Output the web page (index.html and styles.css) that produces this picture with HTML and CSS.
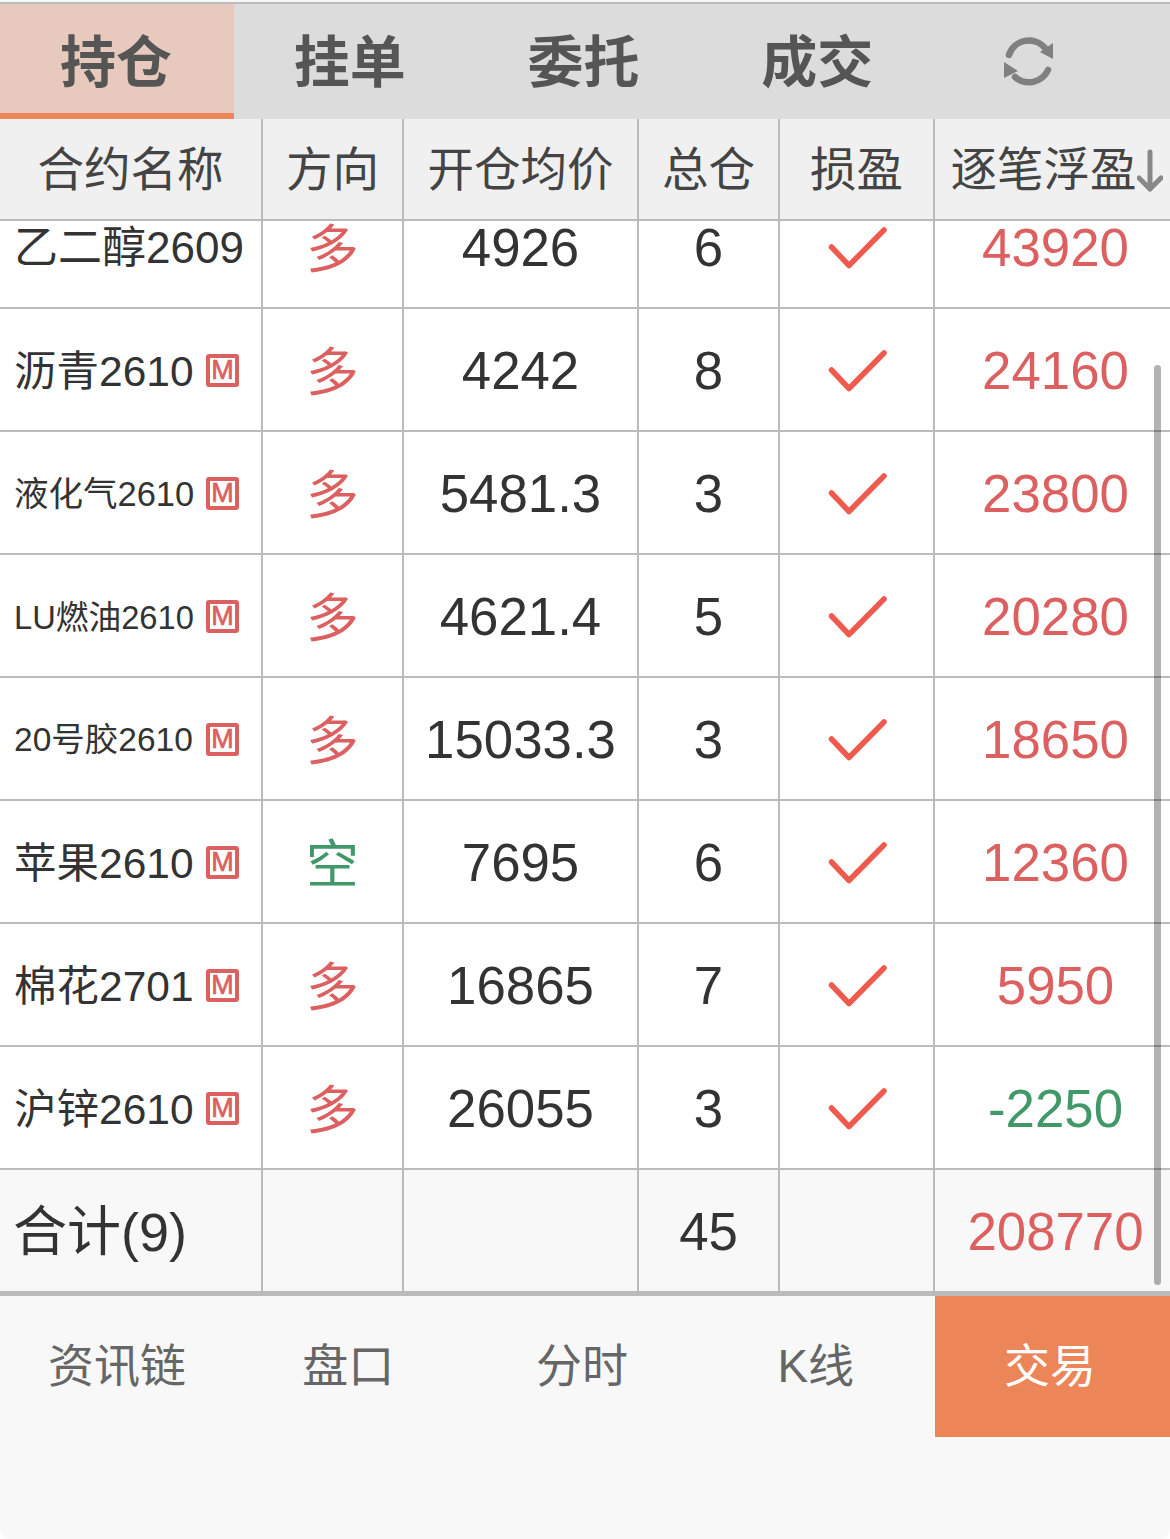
FILE: index.html
```html
<!DOCTYPE html>
<html lang="zh-CN">
<head>
    <meta charset="UTF-8">
    <meta name="viewport" content="width=device-width, initial-scale=1.0">
    <title>持仓</title>
    <link rel="stylesheet" href="styles.css">
</head>
<body>
    <div class="screen">
        <div class="tabs">
            <div class="tab active">持仓</div>
            <div class="tab">挂单</div>
            <div class="tab">委托</div>
            <div class="tab">成交</div>
            <div class="tab refresh-tab">
                <svg class="refresh-icon" viewBox="0 0 52 52" width="52" height="52">
                    <path d="M6 20 A21 21 0 0 1 42 13" class="refresh-arc"/>
                    <path d="M50 8 V24 L37 17 Z" class="refresh-head"/>
                    <path d="M45 35 A21 21 0 0 1 12 42" class="refresh-arc"/>
                    <path d="M1 27 V43 L15 36 Z" class="refresh-head"/>
                </svg>
            </div>
        </div>

        <div class="row head-row">
            <div class="cell">合约名称</div>
            <div class="cell">方向</div>
            <div class="cell">开仓均价</div>
            <div class="cell">总仓</div>
            <div class="cell">损盈</div>
            <div class="cell sort-cell">逐笔浮盈<svg class="sort-arrow" viewBox="0 0 26 46" width="26" height="46"><path d="M13 5 V42 M2 31 L13 42 L24 31"/></svg></div>
        </div>

        <div class="list">
            <div class="list-inner">
                <div class="row pos-row">
                    <div class="cell name size-l">乙二醇2609</div>
                    <div class="cell dir up">多</div>
                    <div class="cell">4926</div>
                    <div class="cell">6</div>
                    <div class="cell"><svg class="check" viewBox="0 0 60 44" width="60" height="44"><path d="M4.5 22 L22 40.5 L57 5"/></svg></div>
                    <div class="cell up">43920</div>
                </div>
                <div class="row pos-row">
                    <div class="cell name size-m">沥青2610<span class="badge">M</span></div>
                    <div class="cell dir up">多</div>
                    <div class="cell">4242</div>
                    <div class="cell">8</div>
                    <div class="cell"><svg class="check" viewBox="0 0 60 44" width="60" height="44"><path d="M4.5 22 L22 40.5 L57 5"/></svg></div>
                    <div class="cell up">24160</div>
                </div>
                <div class="row pos-row">
                    <div class="cell name size-s">液化气2610<span class="badge">M</span></div>
                    <div class="cell dir up">多</div>
                    <div class="cell">5481.3</div>
                    <div class="cell">3</div>
                    <div class="cell"><svg class="check" viewBox="0 0 60 44" width="60" height="44"><path d="M4.5 22 L22 40.5 L57 5"/></svg></div>
                    <div class="cell up">23800</div>
                </div>
                <div class="row pos-row">
                    <div class="cell name size-xs">LU燃油2610<span class="badge">M</span></div>
                    <div class="cell dir up">多</div>
                    <div class="cell">4621.4</div>
                    <div class="cell">5</div>
                    <div class="cell"><svg class="check" viewBox="0 0 60 44" width="60" height="44"><path d="M4.5 22 L22 40.5 L57 5"/></svg></div>
                    <div class="cell up">20280</div>
                </div>
                <div class="row pos-row">
                    <div class="cell name size-t">20号胶2610<span class="badge">M</span></div>
                    <div class="cell dir up">多</div>
                    <div class="cell">15033.3</div>
                    <div class="cell">3</div>
                    <div class="cell"><svg class="check" viewBox="0 0 60 44" width="60" height="44"><path d="M4.5 22 L22 40.5 L57 5"/></svg></div>
                    <div class="cell up">18650</div>
                </div>
                <div class="row pos-row">
                    <div class="cell name size-m">苹果2610<span class="badge">M</span></div>
                    <div class="cell dir down">空</div>
                    <div class="cell">7695</div>
                    <div class="cell">6</div>
                    <div class="cell"><svg class="check" viewBox="0 0 60 44" width="60" height="44"><path d="M4.5 22 L22 40.5 L57 5"/></svg></div>
                    <div class="cell up">12360</div>
                </div>
                <div class="row pos-row">
                    <div class="cell name size-m">棉花2701<span class="badge">M</span></div>
                    <div class="cell dir up">多</div>
                    <div class="cell">16865</div>
                    <div class="cell">7</div>
                    <div class="cell"><svg class="check" viewBox="0 0 60 44" width="60" height="44"><path d="M4.5 22 L22 40.5 L57 5"/></svg></div>
                    <div class="cell up">5950</div>
                </div>
                <div class="row pos-row">
                    <div class="cell name size-m">沪锌2610<span class="badge">M</span></div>
                    <div class="cell dir up">多</div>
                    <div class="cell">26055</div>
                    <div class="cell">3</div>
                    <div class="cell"><svg class="check" viewBox="0 0 60 44" width="60" height="44"><path d="M4.5 22 L22 40.5 L57 5"/></svg></div>
                    <div class="cell down">-2250</div>
                </div>
                <div class="row total-row">
                    <div class="cell name size-total">合计(9)</div>
                    <div class="cell"></div>
                    <div class="cell"></div>
                    <div class="cell">45</div>
                    <div class="cell"></div>
                    <div class="cell up">208770</div>
                </div>
            </div>
            <div class="scrollbar"></div>
        </div>

        <div class="bottom-nav">
            <div class="nav-item">资讯链</div>
            <div class="nav-item">盘口</div>
            <div class="nav-item">分时</div>
            <div class="nav-item">K线</div>
            <div class="nav-item trade">交易</div>
        </div>
    </div>
</body>
</html>
```

FILE: styles.css
```css
body {
    margin: 0;
    background: #fff;
    font-family: "Liberation Sans", "Noto Sans CJK SC", sans-serif;
    color: #333;
    overflow: hidden;
}

.screen {
    height: 1539px;
    padding-top: 2px;
    box-sizing: border-box;
    background: #f8f8f8;
    border-radius: 0 0 10px 10px;
    overflow: hidden;
}

.tabs {
    display: grid;
    grid-template-columns: repeat(4, 233.8px) 1fr;
    height: 115px;
    border-top: 2px solid #bbb;
    background: #dcdcdc;
}

.tab {
    display: flex;
    align-items: center;
    justify-content: center;
    padding: 2px 2px 0 0;
    font-size: 56px;
    line-height: 1.2;
    font-weight: bold;
    color: #555;
}

.tab.active {
    background: #e8c9bd;
    border-bottom: 6px solid #ec8558;
    padding-top: 8px;
}

.refresh-tab {
    padding: 0 48px 2px 0;
}

.refresh-arc {
    fill: none;
    stroke: #808080;
    stroke-width: 6.5;
    stroke-linecap: round;
}

.refresh-head {
    fill: #808080;
}

.row {
    display: grid;
    grid-template-columns: 263px 141px 235px 141px 155px 1fr;
}

.cell {
    display: flex;
    align-items: center;
    justify-content: center;
    padding-top: 2px;
    border-right: 2px solid #bbb;
    white-space: nowrap;
    font-size: 52.8px;
    line-height: 1.2;
}

.cell:last-child {
    border-right: none;
    padding-left: 6px;
}

.head-row {
    height: 102px;
    background: #f0f0f0;
    border-bottom: 2px solid #bbb;
    box-sizing: border-box;
}

.head-row .cell {
    font-size: 46.5px;
    color: #444;
    padding-top: 4px;
}

.head-row .sort-cell {
    padding-left: 8px;
}

.sort-arrow {
    margin-top: -2px;
}

.sort-arrow path {
    fill: none;
    stroke: #888;
    stroke-width: 5;
    stroke-linecap: round;
    stroke-linejoin: round;
}

.list {
    position: relative;
    height: 1070px;
    overflow: hidden;
}

/* first row is scrolled up a bit */
.list-inner {
    margin-top: -35px;
}

.pos-row {
    height: 123px;
    box-sizing: border-box;
    background: #fff;
    border-bottom: 2px solid #bbb;
}

.total-row {
    height: 121px;
    background: #f8f8f8;
}

.name {
    justify-content: space-between;
    padding: 4px 22px 0 14px;
}

.dir {
    padding-top: 6px;
}

.size-l { font-size: 44px; }
.size-m { font-size: 42.5px; }
.size-s { font-size: 34.5px; }
.size-t { font-size: 33.5px; }
.size-xs { font-size: 32.7px; }

.size-total {
    font-size: 54px;
    padding-left: 13px;
}

.up { color: #dc6060; }
.down { color: #419868; }

.badge {
    display: flex;
    align-items: center;
    justify-content: center;
    width: 33px;
    height: 33px;
    margin-top: -2px;
    box-sizing: border-box;
    border: 4px solid #dc6060;
    border-radius: 3px;
    font-size: 27px;
    color: #dc6060;
    -webkit-text-stroke: 0.7px #dc6060;
}

.check {
    margin-top: -2px;
}

.check path {
    fill: none;
    stroke: #ee5a4e;
    stroke-width: 5.5;
    stroke-linecap: round;
    stroke-linejoin: round;
}

.scrollbar {
    position: absolute;
    right: 9px;
    top: 144px;
    width: 7px;
    height: 920px;
    border-radius: 4px;
    background: rgba(0, 0, 0, 0.3);
}

.bottom-nav {
    display: grid;
    grid-template-columns: repeat(4, 233.8px) 1fr;
    height: 141px;
    border-top: 5px solid #bbb;
}

.nav-item {
    display: flex;
    align-items: center;
    justify-content: center;
    padding: 0 5px 0 0;
    font-size: 46px;
    line-height: 1.2;
    color: #666;
}

.nav-item:first-child {
    padding-right: 0;
}

.nav-item.trade {
    background: #ec8558;
    color: #fff;
}
```
